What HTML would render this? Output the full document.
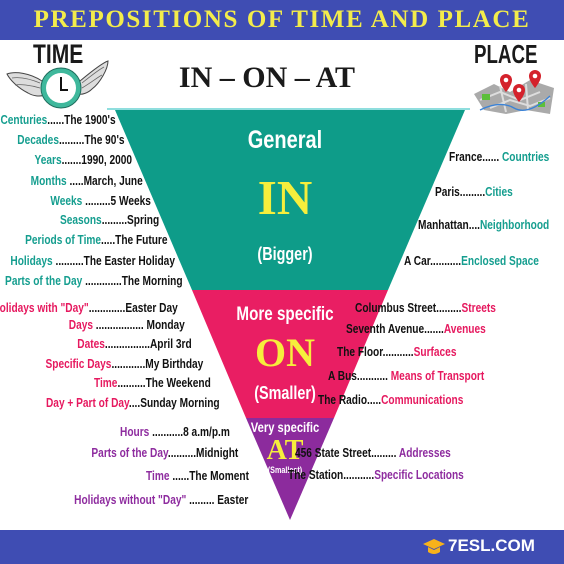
<!DOCTYPE html>
<html><head><meta charset="utf-8"><style>
*{margin:0;padding:0}
body{width:564px;height:564px;position:relative;overflow:hidden;background:#fff;font-family:"Liberation Sans",sans-serif;font-weight:bold}
.l,.r{position:absolute;height:16px;line-height:16px;font-size:13px;white-space:nowrap;color:#111}
.l{text-align:right;transform:scaleX(0.78);transform-origin:right center}
.r{transform:scaleX(0.78);transform-origin:left center}
.t{color:#159e8f}.p{color:#e6195f}.u{color:#8e2c9f}
.c{position:absolute;left:0;width:564px;text-align:center;white-space:nowrap}
.n{transform:scaleX(0.8)}
</style></head><body>
<div style="position:absolute;left:0;top:0;width:564px;height:40px;background:#3f4db3"></div>
<div class="c" style="top:5px;font-family:'Liberation Serif',serif;font-size:25px;color:#f3ec4b;letter-spacing:1.6px;line-height:30px">PREPOSITIONS OF TIME AND PLACE</div>
<div style="position:absolute;left:33px;top:40px;font-size:27px;line-height:28px;color:#1a1a1a;transform:scaleX(0.78);transform-origin:left">TIME</div>
<svg style="position:absolute;left:0;top:55px" width="120" height="60">
<path d="M42 26 C30 18 15 16 7 19 C10 25 18 33 28 38 C33 41 40 42 44 40Z" fill="#ddd" stroke="#444" stroke-width="1"/>
<path d="M40 28 C28 23 18 22 12 23 M40 33 C30 30 20 29 15 30" stroke="#666" fill="none" stroke-width="0.8"/>
<path d="M80 26 C92 16 102 8 108 6 C108 14 100 28 92 34 C88 38 82 40 78 39Z" fill="#ddd" stroke="#444" stroke-width="1"/>
<path d="M82 28 C92 20 100 14 104 12 M82 33 C92 27 98 22 102 20" stroke="#666" fill="none" stroke-width="0.8"/>
<circle cx="61" cy="33" r="20" fill="#3fb89c" stroke="#1f6e5e" stroke-width="1"/>
<circle cx="61" cy="33" r="15" fill="#fff"/>
<path d="M61 22 V35 H68" stroke="#111" stroke-width="2" fill="none"/>
</svg>
<div style="position:absolute;left:474px;top:40px;font-size:26px;line-height:28px;color:#1a1a1a;transform:scaleX(0.72);transform-origin:left">PLACE</div>
<svg style="position:absolute;left:470px;top:70px" width="90" height="45">
<polygon points="4,24 24,14 40,22 60,10 84,18 80,44 56,40 36,44 14,40" fill="#aaa"/>
<path d="M10 30 L30 22 L50 30 L70 22 M20 38 L40 30 L60 36 L80 28 M30 16 L36 42 M56 14 L58 40" stroke="#ddd" stroke-width="2" fill="none"/>
<rect x="12" y="24" width="8" height="6" fill="#5cbf3a"/><rect x="46" y="20" width="7" height="6" fill="#5cbf3a"/><rect x="68" y="32" width="7" height="5" fill="#5cbf3a"/>
<path d="M10 40 Q30 30 44 38 T80 26" stroke="#3a82d6" stroke-width="1.3" fill="none"/>
<g fill="#d4222c"><path d="M36 4 a6 6 0 0 1 6 6 c0 5 -6 12 -6 12 c0 0 -6 -7 -6 -12 a6 6 0 0 1 6 -6z"/><path d="M65 0 a6 6 0 0 1 6 6 c0 5 -6 12 -6 12 c0 0 -6 -7 -6 -12 a6 6 0 0 1 6 -6z"/><path d="M49 14 a6 6 0 0 1 6 6 c0 5 -6 12 -6 12 c0 0 -6 -7 -6 -12 a6 6 0 0 1 6 -6z"/></g>
<g fill="#fff"><circle cx="36" cy="10" r="2.3"/><circle cx="65" cy="6" r="2.3"/><circle cx="49" cy="20" r="2.3"/></g>
</svg>
<div class="c" style="top:60px;left:167px;width:200px;font-family:'Liberation Serif',serif;font-size:30px;line-height:36px;color:#1a1a1a">IN – ON – AT</div>
<div style="position:absolute;left:107px;top:108px;width:363px;height:2px;background:#8fdede"></div>
<svg style="position:absolute;left:0;top:0" width="564" height="564">
<polygon points="115,110 465,110 388,290 192,290" fill="#0e9c89"/>
<polygon points="192,290 388,290 334,418 246,418" fill="#e91e63"/>
<polygon points="246,418 334,418 290,520" fill="#8c2b9d"/>
</svg>
<div class="c n" style="top:125px;left:3px;font-size:25px;line-height:30px;color:#fff">General</div>
<div class="c" style="top:170px;left:3px;font-family:'Liberation Serif',serif;font-size:49px;line-height:56px;color:#f6ee3c">IN</div>
<div class="c n" style="top:243px;left:3px;font-size:18px;line-height:22px;color:#fff">(Bigger)</div>
<div class="c n" style="top:304px;left:3px;font-size:19px;line-height:22px;color:#fff">More specific</div>
<div class="c" style="top:330px;left:3px;font-family:'Liberation Serif',serif;font-size:40px;line-height:46px;color:#f6ee3c">ON</div>
<div class="c n" style="top:382px;left:3px;font-size:18px;line-height:22px;color:#fff">(Smaller)</div>
<div class="c n" style="top:419px;left:3px;font-size:14px;line-height:17px;color:#fff">Very specific</div>
<div class="c" style="top:436px;left:3px;font-family:'Liberation Serif',serif;font-size:28px;line-height:30px;color:#f6ee3c">AT</div>
<div class="c n" style="top:464px;left:3px;font-size:9px;line-height:12px;color:#fff">(Smallest)</div>

<div class="l" style="top:112px;right:448px"><span class="t">Centuries</span>......The 1900's</div>
<div class="l" style="top:132px;right:440px"><span class="t">Decades</span>.........The 90's</div>
<div class="l" style="top:152px;right:432px"><span class="t">Years</span>.......1990, 2000</div>
<div class="l" style="top:173px;right:421px"><span class="t">Months</span> .....March, June</div>
<div class="l" style="top:193px;right:413px"><span class="t">Weeks</span> .........5 Weeks</div>
<div class="l" style="top:212px;right:405px"><span class="t">Seasons</span>.........Spring</div>
<div class="l" style="top:232px;right:396px"><span class="t">Periods of Time</span>.....The Future</div>
<div class="l" style="top:253px;right:389px"><span class="t">Holidays</span> ..........The Easter Holiday</div>
<div class="l" style="top:273px;right:381px"><span class="t">Parts of the Day</span> .............The Morning</div>

<div class="r" style="top:149px;left:449px">France...... <span class="t">Countries</span></div>
<div class="r" style="top:184px;left:435px">Paris.........<span class="t">Cities</span></div>
<div class="r" style="top:217px;left:418px">Manhattan....<span class="t">Neighborhood</span></div>
<div class="r" style="top:253px;left:404px">A Car...........<span class="t">Enclosed Space</span></div>

<div class="l" style="top:300px;right:386px"><span class="p">Holidays with "Day"</span>.............Easter Day</div>
<div class="l" style="top:317px;right:379px"><span class="p">Days</span> ................. Monday</div>
<div class="l" style="top:336px;right:372px"><span class="p">Dates</span>................April 3rd</div>
<div class="l" style="top:356px;right:361px"><span class="p">Specific Days</span>............My Birthday</div>
<div class="l" style="top:375px;right:353px"><span class="p">Time</span>..........The Weekend</div>
<div class="l" style="top:395px;right:344px"><span class="p">Day + Part of Day</span>....Sunday Morning</div>

<div class="r" style="top:300px;left:355px">Columbus Street.........<span class="p">Streets</span></div>
<div class="r" style="top:321px;left:346px">Seventh Avenue.......<span class="p">Avenues</span></div>
<div class="r" style="top:344px;left:337px">The Floor...........<span class="p">Surfaces</span></div>
<div class="r" style="top:368px;left:328px">A Bus........... <span class="p">Means of Transport</span></div>
<div class="r" style="top:392px;left:318px">The Radio.....<span class="p">Communications</span></div>

<div class="l" style="top:424px;right:334px"><span class="u">Hours</span> ...........8 a.m/p.m</div>
<div class="l" style="top:445px;right:326px"><span class="u">Parts of the Day</span>..........Midnight</div>
<div class="l" style="top:468px;right:315px"><span class="u">Time</span> ......The Moment</div>
<div class="l" style="top:492px;right:316px"><span class="u">Holidays without "Day"</span> ......... Easter</div>

<div class="r" style="top:445px;left:295px">456 State Street......... <span class="u">Addresses</span></div>
<div class="r" style="top:467px;left:288px">The Station...........<span class="u">Specific Locations</span></div>

<div style="position:absolute;left:0;top:530px;width:564px;height:34px;background:#3f4db3"></div>
<svg style="position:absolute;left:422px;top:537px" width="24" height="20"><path d="M1 7 L12 2 L23 7 L12 12Z" fill="#f7b21b"/><path d="M6 10 V15 Q12 19 18 15 V10 L12 13Z" fill="#f7b21b"/></svg>
<div style="position:absolute;left:448px;top:533px;font-family:'Liberation Sans',sans-serif;font-weight:bold;font-size:17px;line-height:26px;color:#fff">7ESL.COM</div>
</body></html>
